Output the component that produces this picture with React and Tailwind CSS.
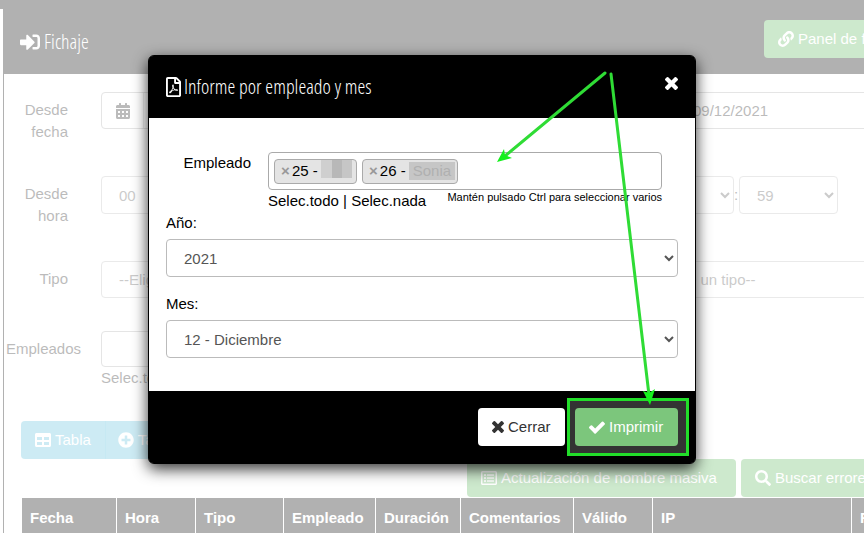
import React from "react";
import {
  FaSignInAlt,
  FaLink,
  FaCalendarAlt,
  FaTable,
  FaPlusCircle,
  FaRegListAlt,
  FaSearch,
  FaRegFilePdf,
} from "react-icons/fa";

const condensed =
  "font-['Open_Sans_Condensed_Light','Open_Sans_Condensed','Liberation_Sans_Narrow',sans-serif] font-light text-[20px] leading-6";
const button =
  "flex h-[38px] shrink-0 items-center gap-1 whitespace-nowrap rounded px-[14px]";
const select = "rounded border border-[#bbb] bg-white pl-[13px] text-[#555]";
const rowLabel = "w-16 shrink-0 pt-[7px] text-right mr-[33px]";
const rowLabelEnd = "w-[133px] shrink-0 pt-[7px] text-right mr-[33px]";

const columns = [
  { name: "Fecha", width: "w-[95px]" },
  { name: "Hora", width: "w-[79px]" },
  { name: "Tipo", width: "w-[88px]" },
  { name: "Empleado", width: "w-[92px]" },
  { name: "Duración", width: "w-[85px]" },
  { name: "Comentarios", width: "w-[113px]" },
  { name: "Válido", width: "w-[79px]" },
  { name: "IP", width: "w-[199px]" },
  { name: "Firma", width: "w-[120px]" },
];

function CrossIcon({ className }) {
  return (
    <svg viewBox="110 366 1188 1188" fill="currentColor" className={className} aria-hidden="true">
      <path d="M1298 1322q0 40-28 68l-136 136q-28 28-68 28t-68-28l-294-294-294 294q-28 28-68 28t-68-28l-136-136q-28-28-28-68t28-68l294-294-294-294q-28-28-28-68t28-68l136-136q28-28 68-28t68 28l294 294 294-294q28-28 68-28t68 28l136 136q28 28 28 68t-28 68l-294 294 294 294q28 28 28 68z" />
    </svg>
  );
}

function CheckIcon({ className }) {
  return (
    <svg viewBox="121 0 1550 1792" fill="currentColor" className={className} aria-hidden="true">
      <path d="M1671 566q0 40-28 68l-724 724-136 136q-28 28-68 28t-68-28l-136-136-362-362q-28-28-28-68t28-68l136-136q28-28 68-28t68 28l294 295 656-657q28-28 68-28t68 28l136 136q28 28 28 68z" />
    </svg>
  );
}

function DateField({ id, value }) {
  return (
    <div className="flex h-[37px] w-[368px] shrink-0 rounded border border-[#aaa]">
      <span className="flex w-[42px] items-center justify-center border-r border-[#ccc]">
        <FaCalendarAlt className="text-[16px]" />
      </span>
      <input id={id} defaultValue={value} className="min-w-0 flex-1 px-[15px]" />
    </div>
  );
}

function TimeField({ id, label, hour, minute }) {
  return (
    <div className="flex w-[368px] shrink-0 items-center">
      <select id={id} className={`${select} h-[38px] w-[99px]`}>
        <option>{hour}</option>
      </select>
      <span className="w-[5px]">:</span>
      <select aria-label={label} className={`${select} h-[38px] w-[99px]`}>
        <option>{minute}</option>
      </select>
    </div>
  );
}

function TypeField({ id }) {
  return (
    <select id={id} className={`${select} h-[37px] w-[368px] shrink-0`}>
      <option>--Elige un tipo--</option>
    </select>
  );
}

function Filters() {
  return (
    <form className="text-[#222]">
      <div className="mb-[33px] flex items-start">
        <label htmlFor="desde-fecha" className={rowLabel}>Desde fecha</label>
        <DateField id="desde-fecha" value="01/12/2021" />
        <label htmlFor="hasta-fecha" className={rowLabelEnd}>Hasta fecha</label>
        <DateField id="hasta-fecha" value="09/12/2021" />
      </div>
      <div className="mb-[34px] flex items-start">
        <label htmlFor="desde-hora" className={rowLabel}>Desde hora</label>
        <TimeField id="desde-hora" label="Desde minuto" hour="00" minute="00" />
        <label htmlFor="hasta-hora" className={rowLabelEnd}>Hasta hora</label>
        <TimeField id="hasta-hora" label="Hasta minuto" hour="23" minute="59" />
      </div>
      <div className="mb-[33px] flex items-start">
        <label htmlFor="tipo" className={rowLabel}>Tipo</label>
        <TypeField id="tipo" />
        <label htmlFor="tipo-2" className={rowLabelEnd}>Tipo</label>
        <TypeField id="tipo-2" />
      </div>
      <div className="mb-8 flex items-start">
        <label htmlFor="empleados" className="mr-5 w-[77px] shrink-0 pt-[7px] text-right">Empleados</label>
        <div className="w-[368px]">
          <input id="empleados" className="block h-9 w-full rounded border border-[#aaa] px-3" />
          <a href="#todo">Selec.todo</a> | <a href="#nada">Selec.nada</a>
        </div>
      </div>
    </form>
  );
}

function Page() {
  return (
    <div className="min-h-screen bg-white opacity-30">
      <div className="h-[9px] bg-black" />
      <div className="flex">
        <aside className="w-[3px] shrink-0" />
        <main className="min-w-[1020px] flex-1 border-l border-black">
          <header className="flex h-[65px] items-start bg-black pl-4 pt-[11px] text-white">
            <h1 className={`${condensed} flex w-[744px] items-center gap-1 pt-[10px]`}>
              <FaSignInAlt />
              Fichaje
            </h1>
            <button className={`${button} bg-[#5cb85c]`}>
              <FaLink className="text-[16px]" />
              Panel de fichaje
            </button>
          </header>
          <div className="pt-[18px]">
            <Filters />
            <div className="pl-[17px] text-white">
              <div className="flex">
                <button className={`${button} rounded-r-none border-r border-[#46b8da] bg-[#5bc0de]`}>
                  <FaTable className="text-[16px]" />
                  Tabla
                </button>
                <button className={`${button} rounded-l-none bg-[#5bc0de] pl-3`}>
                  <FaPlusCircle className="text-[16px]" />
                  Tabla ampliada
                </button>
              </div>
              <div className="ml-[446px] flex gap-[5px]">
                <button className={`${button} w-[269px] bg-[#5cb85c]`}>
                  <FaRegListAlt className="text-[16px]" />
                  Actualización de nombre masiva
                </button>
                <button className={`${button} bg-[#5cb85c]`}>
                  <FaSearch className="text-[16px]" />
                  Buscar errores
                </button>
              </div>
              <table className="w-[950px] table-fixed border-collapse">
                <thead>
                  <tr>
                    {columns.map((column) => (
                      <th
                        key={column.name}
                        className={`${column.width} border border-white bg-black px-2 py-[9px] text-left font-bold`}
                      >
                        {column.name}
                      </th>
                    ))}
                  </tr>
                </thead>
              </table>
            </div>
          </div>
        </main>
      </div>
    </div>
  );
}

function Tag({ number, children }) {
  return (
    <span className="flex h-[25px] items-center rounded border border-[#aaa] bg-[#e4e4e4] pl-[5px]">
      <button aria-label={`Quitar ${number}`} className="mr-px w-[11px] font-bold text-[#999]">×</button>
      <span className="mr-[3px]">{number} -</span>
      {children}
    </span>
  );
}

function Arrows() {
  return (
    <svg className="pointer-events-none absolute -left-px -top-px" width="548" height="409" viewBox="148 55 548 409" fill="none" aria-hidden="true">
      <g stroke="#2fdc35" strokeWidth="3" strokeLinecap="round">
        <path d="M605 73 L505 156" />
        <path d="M611 74 L649 395" />
      </g>
      <g fill="#14f01c">
        <path d="M497 162 L504 149 L505 155 L512 158 Z" />
        <path d="M650 405 L643 391 L649 393 L655 389 Z" />
      </g>
    </svg>
  );
}

function ReportDialog() {
  return (
    <div
      role="dialog"
      aria-labelledby="informe-titulo"
      className="relative w-full max-w-[548px] rounded-md border border-black bg-white shadow-[0_5px_15px_rgba(0,0,0,0.8)]"
    >
      <header className="flex h-[62px] items-center justify-between rounded-t bg-black px-[17px] text-white">
        <h2 id="informe-titulo" className={`${condensed} flex items-center gap-[3px]`}>
          <FaRegFilePdf className="w-[15px]" />
          Informe por empleado y mes
        </h2>
        <button aria-label="Cerrar ventana" className="pb-2">
          <CrossIcon className="w-[13px]" />
        </button>
      </header>
      <form className="px-[17px] pb-[33px] pt-[34px] text-black">
        <div className="flex items-start pr-4">
          <label htmlFor="empleado" className="mr-[17px] w-[85px] text-right">Empleado</label>
          <div className="flex-1">
            <div className="flex h-[38px] items-center gap-[5px] rounded border border-[#aaa] px-[5px]">
              <Tag number="25">
                <span className="mb-1 mr-1 h-[18px] w-[31px] bg-[linear-gradient(90deg,#cfcfcf_35%,#b8b8b8_35%,#b8b8b8_68%,#c6c6c6_68%)]" />
              </Tag>
              <Tag number="26">
                <span className="mr-[2px] h-[18px] w-[46px] bg-[#c6c6c6] pl-1 leading-[18px] text-[#b0b0b0]">Sonia</span>
              </Tag>
              <input id="empleado" className="min-w-0 flex-1" />
            </div>
            <div className="flex items-start justify-between">
              <span>
                <a href="#todo">Selec.todo</a> | <a href="#nada">Selec.nada</a>
              </span>
              <small className="text-[11px] leading-[15px]">Mantén pulsado Ctrl para seleccionar varios</small>
            </div>
          </div>
        </div>
        <label htmlFor="anio" className="mb-[5px] block">Año:</label>
        <select id="anio" className={`${select} mb-4 block h-[38px] w-full`}>
          <option>2021</option>
        </select>
        <label htmlFor="mes" className="mb-[5px] block">Mes:</label>
        <select id="mes" className={`${select} block h-[38px] w-full`}>
          <option>12 - Diciembre</option>
        </select>
      </form>
      <footer className="flex justify-end gap-[10px] rounded-b bg-black p-[17px]">
        <button className={`${button} w-[87px] bg-white text-[#333]`}>
          <CrossIcon className="w-3" />
          Cerrar
        </button>
        <div className="relative">
          <button className={`${button} w-[103px] bg-[#5cb85c] text-white`}>
            <CheckIcon className="w-4" />
            Imprimir
          </button>
          <div className="pointer-events-none absolute -inset-y-[10px] -left-2 -right-[11px] border-[3px] border-[#22dd2a] bg-white/20 bg-clip-padding" />
        </div>
      </footer>
      <Arrows />
    </div>
  );
}

export default function App() {
  return (
    <div className="relative h-screen overflow-hidden bg-white font-['Liberation_Sans',Arial,sans-serif] text-[15px] leading-[22px]">
      <Page />
      <div className="absolute inset-0 flex items-start justify-center pr-5 pt-[55px]">
        <ReportDialog />
      </div>
    </div>
  );
}
